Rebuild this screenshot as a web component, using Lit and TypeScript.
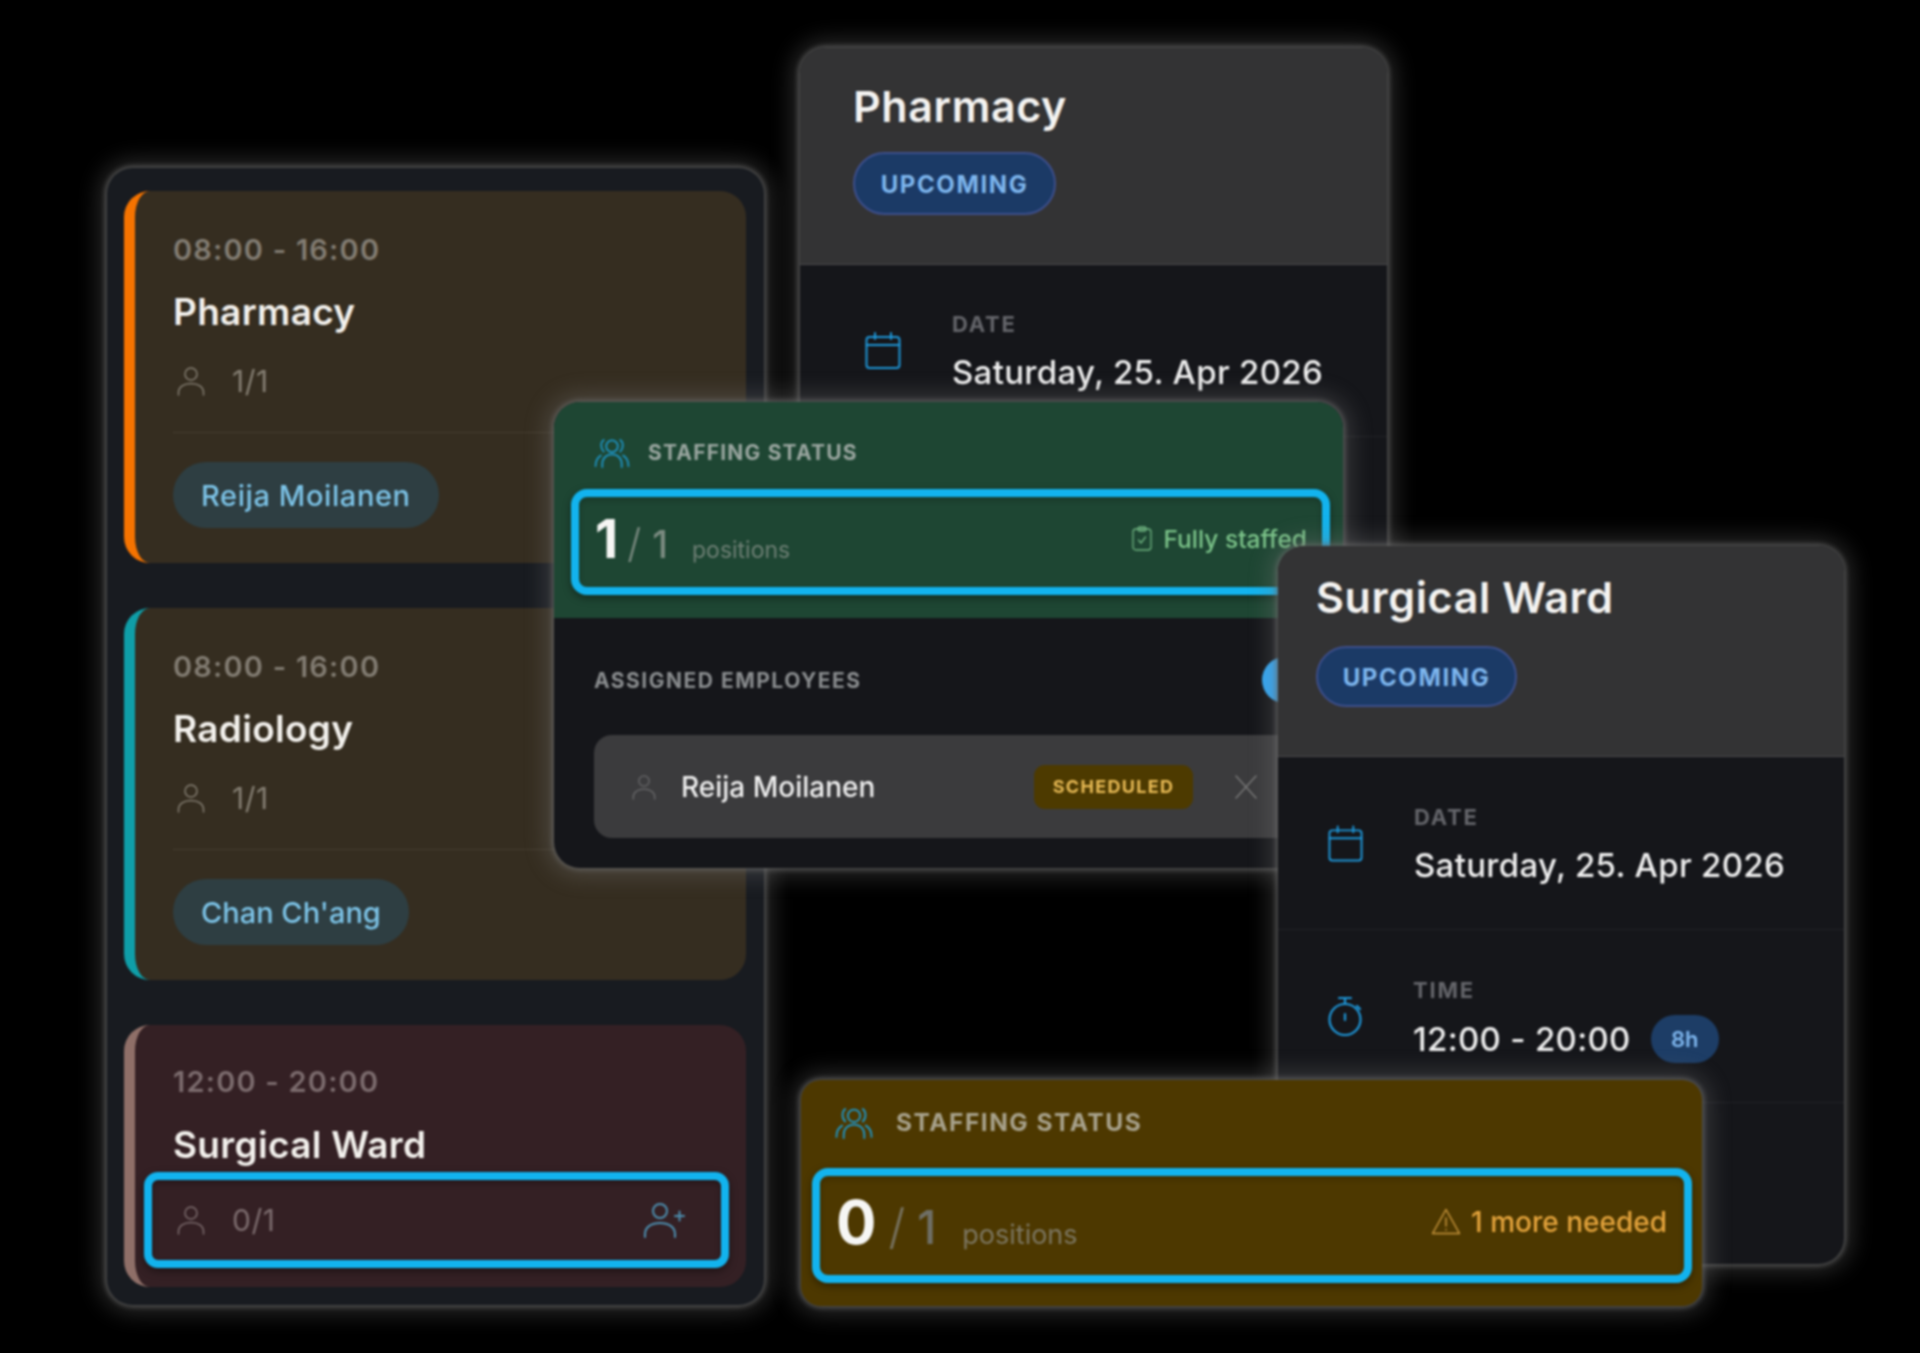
import { LitElement, html, css, svg } from "lit";
import { customElement } from "lit/decorators.js";

const ico = (w: number, h: number, vb: string, cls: string, body: unknown) => html`<svg class="ico ${cls}" width=${w} height=${h} viewBox=${vb} fill="none" stroke="currentColor" stroke-linecap="round" stroke-linejoin="round">${body}</svg>`;

const user = (w: number, h: number, cls = "") => ico(w, h, "0 0 28 30", cls, svg`<g stroke-width="1.5"><circle cx="14" cy="8" r="6"/><path d="M1.5 29v-2.5C1.5 21 7 17.5 14 17.5S26.5 21 26.5 26.5V29"/></g>`);
const userPlus = () => ico(42, 36, "0 0 42 36", "add", svg`<g stroke-width="2"><circle cx="17" cy="9" r="7"/><path d="M2 35v-3c0-7 6.500-11 15-11s15 4 15 11v3M32 14h9M36.500 9.500v9"/></g>`);
const group = (w: number, h: number) => ico(w, h, "0 0 36 32", "grp", svg`<g stroke-width="1.8"><circle cx="18" cy="9.500" r="6"/><path d="M8 31v-3c0-6 4-10 10-10s10 4 10 10v3M9.500 3c-3.500 2.500-3.500 9 0 12M26.500 3c3.500 2.500 3.500 9 0 12M1 30c0-5 2-9 5.500-11M35 30c0-5-2-9-5.500-11"/></g>`);
const cal = (w: number, h: number) => ico(w, h, "0 0 36 37", "blue", svg`<g stroke-width="2"><rect x="1.500" y="5" width="33" height="31" rx="3"/><path d="M1.500 13h33M10 1v6M26 1v6"/></g>`);
const watch = () => ico(34, 40, "0 0 34 40", "blue", svg`<g stroke-width="2.200"><circle cx="17" cy="23.500" r="15.500"/><path d="M11 2h12M17 2v6M17 18v6M29 10l3 3"/></g>`);
const clip = () => ico(20, 25, "0 0 20 25", "", svg`<g stroke-width="1.300"><rect x="1" y="3" width="18" height="21" rx="3"/><rect x="6" y="1" width="8" height="4" rx="1.500"/><path d="M6.500 14l2.500 3 4.500-6"/></g>`);
const warn = () => ico(30, 27, "0 0 30 27", "", svg`<g stroke-width="1.500"><path d="M15 1.500 1.500 25.500h27zM15 10v8M15 21.500v.5"/></g>`);
const cross = () => ico(22, 24, "0 0 22 24", "x", svg`<path stroke-width="1.500" d="M1 1l20 22M21 1 1 23"/>`);

@customElement("app-root")
export class AppRoot extends LitElement {
  static styles = css`
    :host { display: block; width: 1920px; height: 1353px; background: #000; overflow: hidden; }
    * { box-sizing: border-box; }
    .stage { position: relative; width: 1920px; height: 1353px; font-family: Inter, "Liberation Sans", sans-serif; color: #eee; filter: blur(0.8px); }
    .ico { display: block; flex: none; }
    .win { position: absolute; box-shadow: 0 0 5px 2px rgba(105,105,105,.7), 0 0 22px 8px rgba(125,125,125,.33); border-radius: 26px; overflow: hidden; background: #15161a; }

    .panel { left: 107px; top: 168px; width: 657px; height: 1137px; background: #181b20; padding: 23px 18px 0 17px; display: flex; flex-direction: column; gap: 46px; overflow: visible; }
    .panel .card:nth-child(3) { margin-top: -1px; }
    .card { border-radius: 26px; border-left: 11px solid; padding: 41px 38px 0 38px; height: 372px; flex: none; }
    .c1 { background: #352d20; border-color: #f57300; }
    .c2 { background: #352d20; border-color: #0f9ea8; margin-top: -1px; }
    .c3 { background: #342024; border-color: #8f6f68; height: 262px; padding-top: 39px; }
    .time { font-size: 29px; line-height: 36px; font-weight: 600; letter-spacing: 1.200px; color: #827c72; }
    .c3 .time { color: #7c6c6e; }
    .name { font-size: 37px; line-height: 44px; font-weight: 600; letter-spacing: .3px; margin-top: 22px; color: #f2f0ec; }
    .c3 .name { margin-top: 23px; }
    .count { display: flex; align-items: center; gap: 27px; height: 36px; margin-top: 29px; padding-left: 4px; font-size: 30px; letter-spacing: .5px; color: #847e72; }
    .c3 .count { color: #7c6c6e; }
    .card hr { border: 0; height: 1px; background: #453d30; margin: 33px 0 0; }
    .chip { display: inline-flex; align-items: center; height: 66px; margin-top: 29px; padding: 0 28px 0 28px; border-radius: 33px; background: #2e3e42; color: #7dc4e8; font-size: 29px; font-weight: 500; letter-spacing: .6px; }
    .c2 .chip { letter-spacing: 0; }
    .slot { display: flex; align-items: center; justify-content: space-between; height: 96px; margin: 5px -21px 0 -29px; padding: 0 36px 0 25px; border: 8px solid #12b3ee; border-radius: 14px; box-shadow: 0 3px 8px rgba(0,0,0,.45), inset 0 3px 6px rgba(0,0,0,.3); color: #7c6c6e; }
    .slot .count { margin: 0; padding: 0; }
    .add { color: #4d8fb0; }

    .detail { background: #15161a; }
    .pharm { left: 800px; top: 48px; width: 587px; height: 752px; }
    .ward { left: 1278px; top: 546px; width: 566px; height: 718px; }
    .dh { background: #333334; border-bottom: 1px solid #4a4a4c; }
    .pharm .dh { height: 217px; padding: 33px 53px 0; }
    .ward .dh { height: 211px; padding: 26px 38px 0; }
    .dt { font-size: 43px; line-height: 50px; font-weight: 600; letter-spacing: .6px; color: #f4f3f1; }
    .pill { display: flex; align-items: center; justify-content: center; width: 203px; height: 63px; margin-top: 21px; padding-top: 2px; border-radius: 32px; background: #1b3a66; border: 2px solid #3d4f8c; color: #7eb6ee; font-size: 24px; font-weight: 700; letter-spacing: 1.600px; }
    .ward .pill { height: 61px; width: 201px; margin-top: 24px; }
    .drow { display: flex; align-items: center; height: 173px; padding-left: 50px; gap: 51px; border-bottom: 1px solid #222327; }
    .pharm .drow { padding-left: 65px; height: 172px; }
    .info { padding-top: 2px; }
    .pharm .info { padding-top: 0; }
    .info.r2 { padding-top: 5px; }
    .lbl { font-size: 22px; line-height: 30px; font-weight: 700; letter-spacing: 1.800px; color: #64656a; }
    .val { display: flex; align-items: center; gap: 20px; font-size: 33px; line-height: 42px; font-weight: 500; letter-spacing: .3px; color: #eee; margin-top: 12px; }
    .r2 .val { margin-top: 10px; }
    .blue { color: #1e96d8; }
    .hours { display: flex; align-items: center; justify-content: center; width: 68px; height: 48px; border-radius: 24px; background: #1d3d66; color: #7eb6ee; font-size: 22px; font-weight: 600; letter-spacing: 0; }

    .staff { left: 554px; top: 402px; width: 789px; height: 466px; }
    .sh { height: 216px; background: #1e4633; padding-top: 32px; }
    .st { display: flex; align-items: center; gap: 18px; height: 36px; padding-left: 40px; font-size: 21px; font-weight: 700; letter-spacing: 1.200px; color: #9aa6a0; }
    .grp { color: #1e96c8; }
    .status { display: flex; align-items: center; justify-content: space-between; border: 8px solid #12b3ee; border-radius: 16px; box-shadow: 0 3px 8px rgba(0,0,0,.4), inset 0 3px 6px rgba(0,0,0,.2); }
    .sh .status { height: 106px; margin: 19px 13px 0 17px; padding: 0 15px 7px 16px; }
    .nums { display: flex; align-items: baseline; color: #7a8a80; }
    .big { font-weight: 700; color: #f6f6f4; }
    .sh .big { font-size: 54px; }
    .sh .den { font-size: 38px; font-weight: 500; }
    .sh .sl { font-size: 40px; margin: 0 11px 0 9px; font-weight: 300; }
    .sh .pos { font-size: 23px; margin-left: 24px; color: #6d7f74; }
    .ok { display: flex; align-items: center; gap: 11px; font-size: 24.500px; font-weight: 500; color: #7cc48a; }
    .ok .ico { color: #6fb480; }
    .sec { padding: 44px 0 0 40px; width: 756px; }
    .ae { display: flex; align-items: center; height: 36px; font-size: 21px; font-weight: 700; letter-spacing: 1.500px; color: #8a8d8f; }
    .dot { margin: -5px 0 -5px auto; width: 45px; height: 46px; border-radius: 50%; background: #33a8f5; flex: none; transform: translateX(-3px); }
    .emp { display: flex; align-items: center; height: 103px; margin-top: 37px; padding: 0 53px 0 38px; border-radius: 18px; background: #3b3b3d; color: #6a6a6c; }
    .ename { margin-left: 25px; font-size: 28px; font-weight: 500; color: #eee; }
    .sched { display: flex; align-items: center; justify-content: center; width: 159px; height: 44px; margin: 0 42px 0 auto; border-radius: 11px; background: #4d3a00; color: #e8ba55; font-size: 18px; font-weight: 700; letter-spacing: 1.300px; }
    .x { color: #777; }

    .amber { left: 801px; top: 1080px; width: 901px; height: 226px; background: #4d3800; border-radius: 20px; padding-top: 24px; }
    .amber .st { padding-left: 32px; gap: 21px; font-size: 24.500px; letter-spacing: 1.500px; color: #a8a28c; }
    .amber .status { height: 115px; margin: 28px 10px 0 11px; padding: 0 17px 8px 16px; }
    .amber .big { font-size: 60px; }
    .amber .den { font-size: 46px; font-weight: 500; color: #6f6f66; }
    .amber .sl { font-size: 48px; margin: 0 12px; font-weight: 300; color: #77725f; }
    .amber .pos { font-size: 27px; margin-left: 26px; color: #7c7660; }
    .need { display: flex; align-items: center; gap: 10px; font-size: 28px; font-weight: 500; color: #e5a43c; }
    .need .ico { color: #c9963c; }
  `;

  private card(cls: string, time: string, name: string, count: string, who: string) {
    return html`<div class="card ${cls}">
      <div class="time">${time}</div>
      <div class="name">${name}</div>
      <div class="count">${user(28, 30)}<span>${count}</span></div>
      <hr />
      <div class="chip">${who}</div>
    </div>`;
  }

  render() {
    return html`<div class="stage">
      <section class="win panel">
        ${this.card("c1", "08:00 - 16:00", "Pharmacy", "1/1", "Reija Moilanen")}
        ${this.card("c2", "08:00 - 16:00", "Radiology", "1/1", "Chan Ch'ang")}
        <div class="card c3">
          <div class="time">12:00 - 20:00</div>
          <div class="name">Surgical Ward</div>
          <div class="slot"><div class="count">${user(28, 30)}<span>0/1</span></div>${userPlus()}</div>
        </div>
      </section>

      <section class="win detail pharm">
        <div class="dh"><div class="dt">Pharmacy</div><div class="pill">UPCOMING</div></div>
        <div class="drow">${cal(36, 37)}<div class="info"><div class="lbl">DATE</div><div class="val">Saturday, 25. Apr 2026</div></div></div>
      </section>

      <section class="win staff">
        <div class="sh">
          <div class="st">${group(36, 31)}<span>STAFFING STATUS</span></div>
          <div class="status">
            <div class="nums"><span class="big">1</span><span class="sl">/</span><span class="den">1</span><span class="pos">positions</span></div>
            <div class="ok">${clip()}<span>Fully staffed</span></div>
          </div>
        </div>
        <div class="sec">
          <div class="ae"><span>ASSIGNED EMPLOYEES</span><span class="dot"></span></div>
          <div class="emp">${user(24, 34)}<span class="ename">Reija Moilanen</span><span class="sched">SCHEDULED</span>${cross()}</div>
        </div>
      </section>

      <section class="win detail ward">
        <div class="dh"><div class="dt">Surgical Ward</div><div class="pill">UPCOMING</div></div>
        <div class="drow">${cal(35, 37)}<div class="info"><div class="lbl">DATE</div><div class="val">Saturday, 25. Apr 2026</div></div></div>
        <div class="drow">${watch()}<div class="info r2"><div class="lbl">TIME</div><div class="val"><span>12:00 - 20:00</span><span class="hours">8h</span></div></div></div>
      </section>

      <section class="win amber">
        <div class="st">${group(42, 33)}<span>STAFFING STATUS</span></div>
        <div class="status">
          <div class="nums"><span class="big">0</span><span class="sl">/</span><span class="den">1</span><span class="pos">positions</span></div>
          <div class="need">${warn()}<span>1 more needed</span></div>
        </div>
      </section>
    </div>`;
  }
}
